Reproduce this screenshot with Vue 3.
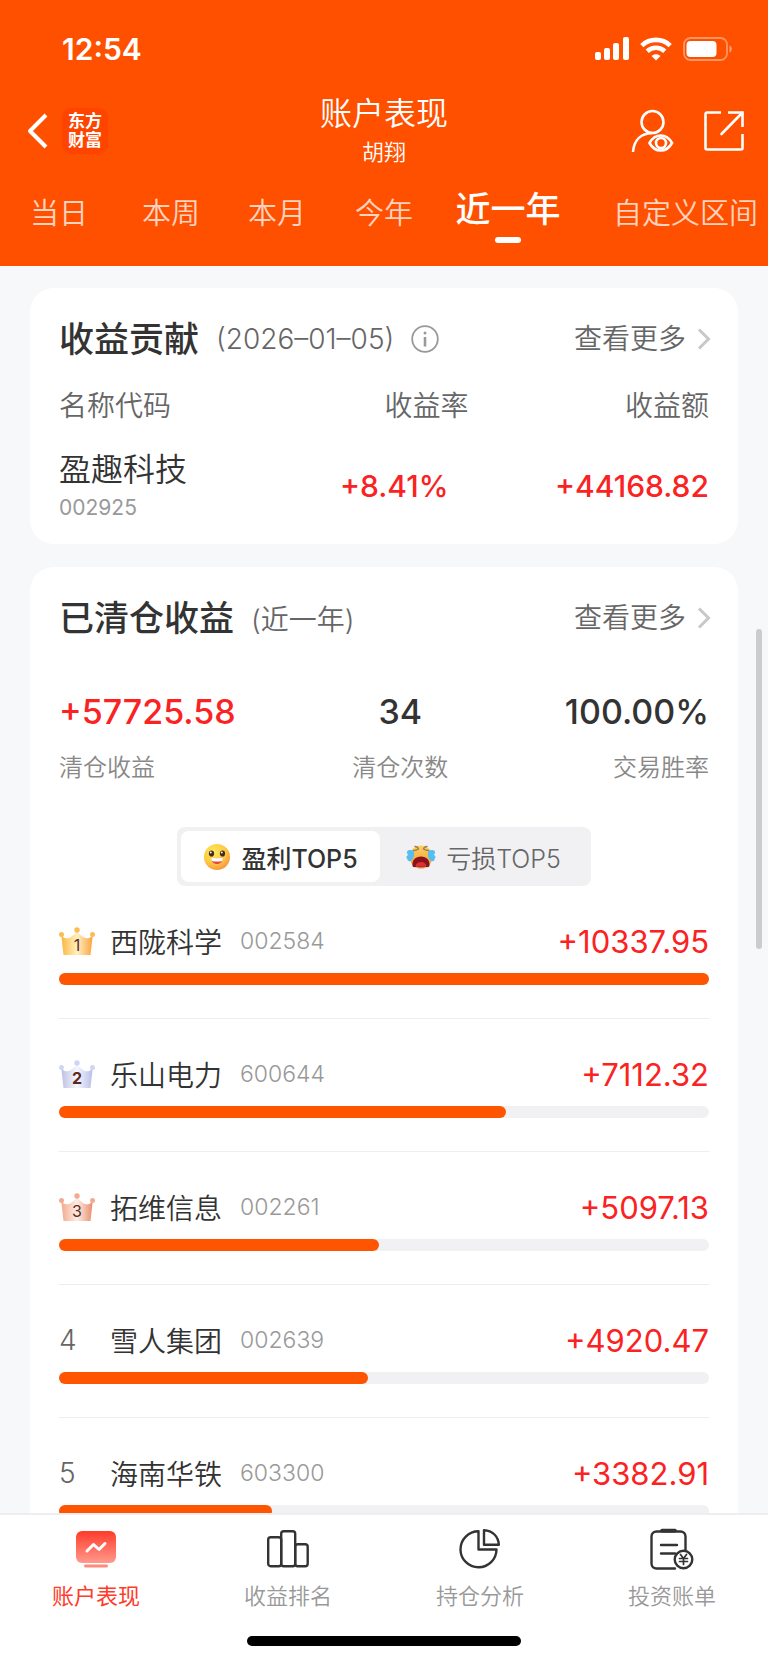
<script setup>
import { ref } from 'vue'

const periods = ['当日', '本周', '本月', '今年', '近一年', '自定义区间']
const period = ref('近一年')

const side = ref('profit')

const stats = [
  { value: '+57725.58', label: '清仓收益', up: true },
  { value: '34', label: '清仓次数' },
  { value: '100.00%', label: '交易胜率' },
]

const ranks = [
  { name: '西陇科学', code: '002584', value: '+10337.95', share: 100 },
  { name: '乐山电力', code: '600644', value: '+7112.32', share: 68.8 },
  { name: '拓维信息', code: '002261', value: '+5097.13', share: 49.3 },
  { name: '雪人集团', code: '002639', value: '+4920.47', share: 47.6 },
  { name: '海南华铁', code: '603300', value: '+3382.91', share: 32.7 },
]

const crowns = [
  { edge: '#fdb63c', mid: '#fff0c4', end: '#fba23a', ball: '#fcbc55' },
  { edge: '#bcc0e2', mid: '#f6f7fd', end: '#b9bdea', ball: '#d0d5f3' },
  { edge: '#f3a98c', mid: '#fdeee6', end: '#e98d6c', ball: '#f2ab91' },
]
</script>

<template>
  <div class="app">
    <header class="header">
      <div class="status">
        <span class="clock">12:54</span>
        <div class="signals">
          <svg width="34" height="24" viewBox="0 0 34 24" fill="#fff" aria-hidden="true">
            <rect x="0" y="15" width="6" height="8" rx="2" />
            <rect x="9" y="11" width="6" height="12" rx="2" />
            <rect x="18" y="6" width="6" height="17" rx="2" />
            <rect x="28" y="0" width="6" height="23" rx="2" />
          </svg>
          <svg class="wifi" width="32" height="24" viewBox="0 0 32 24" aria-hidden="true">
            <g fill="none" stroke="#fff" stroke-width="4.6">
              <path d="M1.8 8.6C9.8 1 22.2 1 30.2 8.6" />
              <path d="M7.2 14.2C12.2 9.6 19.8 9.6 24.8 14.2" />
            </g>
            <path d="M16 23.6l-4.5-4.6c2.6-2.2 6.4-2.2 9 0z" fill="#fff" />
          </svg>
          <svg class="battery" width="50" height="24" viewBox="0 0 50 24" aria-hidden="true">
            <rect x="1" y="1" width="43" height="22" rx="6.5" fill="none" stroke="#fff" stroke-opacity=".4" stroke-width="1.8" />
            <rect x="3.5" y="4" width="30" height="16" rx="4" fill="#fff" />
            <path d="M46.5 8.5c3 1 3 6 0 7z" fill="#fff" fill-opacity=".45" />
          </svg>
        </div>
      </div>

      <div class="nav">
        <div class="nav-left">
          <button class="icon-btn" type="button" aria-label="返回">
            <svg width="22" height="36" viewBox="0 0 22 36" fill="none" stroke="#fff" stroke-width="4">
              <path d="M19 2L3 18l16 16" stroke-linejoin="round" />
            </svg>
          </button>
          <div class="logo"><span>东方</span><span>财富</span></div>
        </div>
        <div class="nav-title">
          <h1>账户表现</h1>
          <p>胡翔</p>
        </div>
        <div class="nav-right">
          <button class="icon-btn" type="button" aria-label="查看账户">
            <svg width="44" height="44" viewBox="0 0 44 44" fill="none" stroke="#fff" stroke-width="2.6">
              <circle cx="22.500" cy="13" r="11" />
              <path d="M3 43C4 31 11 24.500 22 24" />
              <path d="M19.500 34c5.500-10 17-10 22.500 0-5.500 10-17 10-22.500 0z" />
              <circle cx="31" cy="34" r="5" />
            </svg>
          </button>
          <button class="icon-btn" type="button" aria-label="分享">
            <svg width="40" height="40" viewBox="0 0 40 40" fill="none" stroke="#fff" stroke-width="2.600">
              <path d="M17 1.500H3a1.500 1.500 0 0 0-1.500 1.500v34A1.500 1.500 0 0 0 3 38.500h34a1.500 1.500 0 0 0 1.500-1.500V23" />
              <path d="M24 1.500h14.500V16" />
              <path d="M38 2L17.500 23" stroke-linecap="round" />
            </svg>
          </button>
        </div>
      </div>

      <nav class="periods" aria-label="区间">
        <button
          v-for="p in periods"
          :key="p"
          type="button"
          class="period"
          :class="{ active: p === period }"
          @click="period = p"
        >
          {{ p }}
        </button>
      </nav>
    </header>

    <main class="content">
      <section class="card contribution">
        <div class="card-head">
          <h2>收益贡献</h2>
          <span class="note">(2026–01–05)</span>
          <svg class="info" width="28" height="28" viewBox="0 0 28 28" fill="none" stroke="#999" aria-hidden="true">
            <circle cx="14" cy="14" r="12.800" stroke-width="1.800" />
            <path d="M14 12v9.500" stroke-width="2.600" />
            <circle cx="14" cy="8" r="1.500" fill="#999" stroke="none" />
          </svg>
          <a class="more" href="#">
            查看更多
            <svg width="14" height="22" viewBox="0 0 14 22" fill="none" stroke="#c8c8c8" stroke-width="3">
              <path d="M2 1.500L11.500 11 2 20.500" />
            </svg>
          </a>
        </div>
        <table class="table">
          <thead>
            <tr>
              <th>名称代码</th>
              <th>收益率</th>
              <th>收益额</th>
            </tr>
          </thead>
          <tbody>
            <tr>
              <td>
                <div class="stock">盈趣科技</div>
                <div class="stock-code">002925</div>
              </td>
              <td class="gain rate">+8.41%</td>
              <td class="gain">+44168.82</td>
            </tr>
          </tbody>
        </table>
      </section>

      <section class="card">
        <div class="card-head">
          <h2>已清仓收益</h2>
          <span class="note">(近一年)</span>
          <a class="more" href="#">
            查看更多
            <svg width="14" height="22" viewBox="0 0 14 22" fill="none" stroke="#c8c8c8" stroke-width="3">
              <path d="M2 1.500L11.500 11 2 20.500" />
            </svg>
          </a>
        </div>

        <dl class="stats">
          <div v-for="s in stats" :key="s.label" class="stat">
            <dt>{{ s.label }}</dt>
            <dd :class="{ up: s.up }">{{ s.value }}</dd>
          </div>
        </dl>

        <div class="switch">
          <button type="button" :class="{ on: side === 'profit' }" @click="side = 'profit'">
            <svg width="28" height="28" viewBox="0 0 28 28" aria-hidden="true">
              <defs>
                <radialGradient id="smile" cx=".38" cy=".3" r=".75">
                  <stop offset="0" stop-color="#ffe75e" />
                  <stop offset=".6" stop-color="#fdc93e" />
                  <stop offset="1" stop-color="#f5924a" />
                </radialGradient>
              </defs>
              <circle cx="14" cy="14" r="13" fill="url(#smile)" />
              <ellipse cx="8.500" cy="10.500" rx="2.600" ry="3.100" fill="#43291d" />
              <ellipse cx="19.500" cy="10.500" rx="2.600" ry="3.100" fill="#43291d" />
              <circle cx="7.800" cy="9.500" r=".9" fill="#fff" />
              <circle cx="18.800" cy="9.500" r=".9" fill="#fff" />
              <path d="M8 14.500c4 1 8 1 12 0-.2 4.400-2.800 6.500-6 6.500s-5.800-2.100-6-6.500z" fill="#e8493c" />
              <path d="M8 14.500c4 1 8 1 12 0l-.6 3.500c-3.400.8-7.400.8-10.800 0z" fill="#fff" />
            </svg>
            <span>盈利TOP5</span>
          </button>
          <button type="button" :class="{ on: side === 'loss' }" @click="side = 'loss'">
            <svg width="30" height="28" viewBox="0 0 30 28" aria-hidden="true">
              <defs>
                <linearGradient id="cry" x1="0" y1="0" x2="0" y2="1">
                  <stop offset="0" stop-color="#fbd45c" />
                  <stop offset="1" stop-color="#f0973c" />
                </linearGradient>
              </defs>
              <circle cx="15" cy="14" r="11.500" fill="url(#cry)" />
              <g fill="none" stroke="#a0785a" stroke-width="1.400" stroke-linecap="round" stroke-linejoin="round">
                <path d="M9 3.500c1.500 0 3 1 3.500 2.500-1.500 1-3.500 1.500-5 1.500" />
                <path d="M21 3.500c-1.500 0-3 1-3.500 2.500 1.500 1 3.500 1.500 5 1.500" />
              </g>
              <path d="M6.500 23c-.5-6 3-9.500 8.500-9.500s9 3.500 8.500 9.500c-1 1.500-3 1.500-4 .5-2 1-7 1-9 0-1 1-3 1-4-.5z" fill="#8d1119" />
              <path d="M9.500 23c1-3 2.500-4 5.500-4s4.500 1 5.500 4c-3 1-8 1-11 0z" fill="#d8303a" />
              <g fill="#56bdf0">
                <path d="M8 8.500C4 6 .5 7 1 10c.2 1 .8 1.500 1.500 2C0 12.500 0 15 1.500 16c-.5 2 2 3 4 1.500S8.500 12 8 8.500z" />
                <path d="M22 8.500c4-2.500 7.500-1.500 7 1.500-.2 1-.8 1.500-1.500 2 2.500.5 2.500 3 1 4 .5 2-2 3-4 1.500S21.500 12 22 8.500z" />
              </g>
            </svg>
            <span>亏损TOP5</span>
          </button>
        </div>

        <ol class="ranks">
          <li v-for="(r, i) in ranks" :key="r.code" class="rank">
            <div class="rank-line">
              <span v-if="i < 3" class="medal">
                <svg width="36" height="28" viewBox="0 0 36 28" aria-hidden="true">
                  <defs>
                    <linearGradient :id="'crown' + i" x1="0" y1="0" x2="1" y2="0">
                      <stop offset="0" :stop-color="crowns[i].edge" />
                      <stop offset=".5" :stop-color="crowns[i].mid" />
                      <stop offset="1" :stop-color="crowns[i].end" />
                    </linearGradient>
                  </defs>
                  <path
                    d="M2.300 8.500C6 12 9 12 12 10 14.500 8 16.500 6.500 18 4.500c1.500 2 3.500 3.500 6 5.500 3 2 6 2 9.700-1.500L31.500 28h-27z"
                    :fill="`url(#crown${i})`"
                  />
                  <g :fill="crowns[i].ball">
                    <circle cx="2.500" cy="7.500" r="2.500" />
                    <circle cx="18" cy="3" r="2.700" />
                    <circle cx="33.500" cy="7.500" r="2.500" />
                  </g>
                </svg>
                <b :class="{ heavy: i === 1 }">{{ i + 1 }}</b>
              </span>
              <span v-else class="place">{{ i + 1 }}</span>
              <span class="name">{{ r.name }}</span>
              <span class="code">{{ r.code }}</span>
              <span class="amount">{{ r.value }}</span>
            </div>
            <div class="track"><div class="fill" :style="{ width: r.share + '%' }"></div></div>
          </li>
        </ol>
      </section>
      <div class="scrollbar"></div>
    </main>

    <footer class="tabbar">
      <nav class="tabs">
        <a class="tab current" href="#">
          <svg width="44" height="44" viewBox="0 0 44 44" fill="none" aria-hidden="true">
            <defs>
              <linearGradient id="screen" x1="0" y1="0" x2="0" y2="1">
                <stop offset="0" stop-color="#ff3b2a" />
                <stop offset="1" stop-color="#ff9a8c" />
              </linearGradient>
            </defs>
            <rect x="2" y="4" width="40" height="32" rx="6" fill="url(#screen)" />
            <path d="M13 24l6.500-6.500 5.500 5 6-6" stroke="#fff" stroke-width="3" stroke-linecap="round" stroke-linejoin="round" />
            <rect x="10" y="37.500" width="24" height="3" rx="1.500" fill="#ff8a7b" />
          </svg>
          <span>账户表现</span>
        </a>
        <a class="tab" href="#">
          <svg width="44" height="44" viewBox="0 0 44 44" fill="none" stroke="#333" stroke-width="2.400" aria-hidden="true">
            <rect x="2.200" y="10.200" width="13" height="29" rx="2.500" />
            <rect x="15.200" y="4.200" width="14" height="35" rx="2.500" />
            <rect x="29.200" y="17.200" width="12.500" height="22" rx="2.500" />
          </svg>
          <span>收益排名</span>
        </a>
        <a class="tab" href="#">
          <svg width="44" height="44" viewBox="0 0 44 44" fill="none" stroke="#333" stroke-width="2.400" stroke-linejoin="round" aria-hidden="true">
            <path d="M20.500 4.300A18 18 0 1 0 38.500 22.500h-18z" />
            <path d="M26 3.200V17.800H40.800C40.500 9.500 34.500 3.500 26 3.200z" />
          </svg>
          <span>持仓分析</span>
        </a>
        <a class="tab" href="#">
          <svg width="44" height="44" viewBox="0 0 44 44" fill="none" stroke="#333" stroke-width="2.400" stroke-linecap="round" stroke-linejoin="round" aria-hidden="true">
            <path d="M25 41.500H6.500a5 5 0 0 1-5-5v-27a5 5 0 0 1 5-5h24a5 5 0 0 1 5 5V23" />
            <path d="M12 3.600h13" stroke-width="3.600" />
            <path d="M11 18h16M11 26.500h14" />
            <circle cx="33.500" cy="32.500" r="8.800" fill="#fff" />
            <g stroke-width="1.700">
              <path d="M30.500 27.500l3 4 3-4M33.500 31.500v6M29.500 31.500h8M29.500 34.500h8" />
            </g>
          </svg>
          <span>投资账单</span>
        </a>
      </nav>
      <div class="home"></div>
    </footer>
  </div>
</template>

<style>
body {
  margin: 0;
}
</style>

<style scoped>
.app {
  display: flex;
  flex-direction: column;
  height: 100vh;
  overflow: hidden;
  background: #f7f8fa;
  color: #333;
  font-family: Inter, "Noto Sans CJK SC", sans-serif;
}

button {
  margin: 0;
  padding: 0;
  border: 0;
  background: none;
  color: inherit;
  font: inherit;
  cursor: pointer;
}

a {
  color: inherit;
  text-decoration: none;
}

h1,
h2,
p,
dl,
dd,
ol {
  margin: 0;
  padding: 0;
}

svg {
  display: block;
  flex: none;
}

.header {
  flex: none;
  background: #ff5000;
  color: #fff;
}

.status {
  display: flex;
  align-items: center;
  justify-content: space-between;
  height: 82px;
  padding: 8px 35px 0 62px;
}

.clock {
  font-size: 30px;
  font-weight: 600;
  line-height: 36px;
}

.signals {
  display: flex;
  align-items: center;
}

.wifi {
  margin-left: 11px;
}

.battery {
  margin-left: 11px;
}

.nav {
  display: grid;
  grid-template-columns: 1fr auto 1fr;
  align-items: center;
  height: 82px;
  padding: 0 24px;
}

.nav-left {
  display: flex;
  align-items: center;
  gap: 13px;
  padding-left: 3px;
}

.logo {
  display: flex;
  flex-direction: column;
  align-items: center;
  justify-content: center;
  width: 46px;
  height: 46px;
  border-radius: 9px;
  background: #ff4400;
  font-size: 17px;
  font-weight: 700;
  line-height: 19px;
}

.nav-title {
  text-align: center;
}

.nav-title h1 {
  font-size: 32px;
  font-weight: 350;
  line-height: 42px;
}

.nav-title p {
  font-size: 22px;
  font-weight: 350;
  line-height: 34px;
}

.nav-right {
  display: flex;
  align-items: center;
  justify-content: flex-end;
  gap: 30px;
}

.periods {
  display: grid;
  grid-template-columns: 118fr 106fr 106fr 108fr 140fr 190fr;
  align-items: center;
  height: 84px;
  padding-bottom: 10px;
}

.period {
  position: relative;
  color: rgba(255, 255, 255, 0.75);
  font-size: 29px;
  font-weight: 350;
  line-height: 40px;
  white-space: nowrap;
}

.period:last-child {
  padding-right: 10px;
  text-align: right;
}

.period.active {
  padding-bottom: 10px;
  color: #fff;
  font-size: 35px;
  font-weight: 500;
}

.period.active::after {
  content: "";
  position: absolute;
  left: 50%;
  bottom: -4px;
  width: 26px;
  height: 6px;
  margin-left: -13px;
  border-radius: 3px;
  background: #fff;
}

.content {
  position: relative;
  display: flex;
  flex: 1;
  flex-direction: column;
  gap: 23px;
  min-height: 0;
  padding: 22px 30px 0;
  overflow: hidden;
}

.card {
  flex: none;
  padding: 25px 29px 26px;
  border-radius: 24px;
  background: #fff;
}

.contribution {
  padding-bottom: 14px;
}

.card-head {
  display: flex;
  align-items: center;
  height: 52px;
}

.card-head h2 {
  font-size: 35px;
  font-weight: 500;
  line-height: 52px;
}

.note {
  margin-left: 17px;
  color: #666;
  font-size: 28px;
  font-weight: 350;
}

.info {
  margin-left: 17px;
}

.more {
  display: flex;
  align-items: center;
  gap: 11px;
  margin-left: auto;
  margin-right: -2px;
  color: #666;
  font-size: 28px;
  font-weight: 350;
  line-height: 40px;
}

.table {
  width: 100%;
  border-collapse: collapse;
}

.table th {
  height: 77px;
  padding: 0;
  color: #666;
  font-size: 28px;
  font-weight: 350;
  text-align: right;
}

.table th:first-child,
.table td:first-child {
  width: 30%;
  text-align: left;
}

.table th:nth-child(2),
.table td:nth-child(2) {
  width: 33%;
}

.table td {
  height: 88px;
  padding: 0;
  text-align: right;
}

.stock {
  font-size: 32px;
  font-weight: 350;
  line-height: 44px;
}

.stock-code {
  color: #999;
  font-size: 21px;
  font-weight: 400;
  line-height: 32px;
}

.table .gain {
  color: #fa2222;
  font-size: 30px;
  font-weight: 500;
}

.table .rate {
  padding-right: 20px;
}

.stats {
  display: flex;
  justify-content: space-between;
  margin-top: 44px;
}

.stat {
  display: flex;
  flex-direction: column-reverse;
  gap: 14px;
  text-align: center;
}

.stat:first-child {
  text-align: left;
}

.stat:last-child {
  text-align: right;
}

.stat dt {
  color: #888;
  font-size: 24px;
  font-weight: 350;
  line-height: 36px;
}

.stat dd {
  font-size: 34px;
  font-weight: 500;
  line-height: 48px;
}

.stat dd.up {
  color: #fa2222;
}

.switch {
  display: flex;
  width: max-content;
  margin: 41px auto 0;
  padding: 4px;
  border-radius: 8px;
  background: #f1f1f4;
}

.switch button {
  display: flex;
  align-items: center;
  justify-content: center;
  gap: 10px;
  width: 199px;
  height: 51px;
  border-radius: 8px;
  color: #666;
  font-size: 25px;
  font-weight: 350;
}

.switch button:last-child {
  width: 207px;
}

.switch button.on {
  background: #fff;
  color: #333;
  font-weight: 500;
}

.ranks {
  list-style: none;
}

.rank {
  height: 132px;
  border-bottom: 1px solid #eee;
}

.rank-line {
  display: flex;
  align-items: center;
  padding-top: 31px;
  height: 48px;
}

.medal {
  position: relative;
  width: 51px;
}

.medal b {
  position: absolute;
  left: 0;
  bottom: 0;
  width: 36px;
  color: #5c2a1c;
  font-size: 16px;
  font-weight: 400;
  line-height: 20px;
  text-align: center;
}

.medal b.heavy {
  font-weight: 700;
}

.place {
  width: 51px;
  color: #666;
  font-size: 28px;
  font-weight: 350;
}

.name {
  font-size: 28px;
  font-weight: 350;
}

.code {
  margin-left: 18px;
  color: #999;
  font-size: 23px;
  font-weight: 350;
}

.amount {
  margin-left: auto;
  color: #fa2222;
  font-size: 31px;
  font-weight: 400;
}

.track {
  height: 12px;
  margin-top: 8px;
  border-radius: 6px;
  background: #f1f1f4;
}

.fill {
  height: 12px;
  border-radius: 6px;
  background: #ff5500;
}

.scrollbar {
  position: absolute;
  top: 363px;
  right: 6px;
  width: 6px;
  height: 320px;
  border-radius: 3px;
  background: #cbcccd;
}

.tabbar {
  flex: none;
  padding-bottom: 17px;
  border-top: 2px solid #eeeef0;
  background: #fff;
}

.tabs {
  display: grid;
  grid-template-columns: repeat(4, 1fr);
  height: 121px;
}

.tab {
  display: flex;
  flex-direction: column;
  align-items: center;
  gap: 9px;
  padding-top: 12px;
  color: #999;
  font-size: 22px;
  font-weight: 350;
  line-height: 32px;
}

.tab.current {
  color: #ff3b2a;
  font-weight: 400;
}

.home {
  width: 274px;
  height: 10px;
  margin: 0 auto;
  border-radius: 5px;
  background: #000;
}
</style>
